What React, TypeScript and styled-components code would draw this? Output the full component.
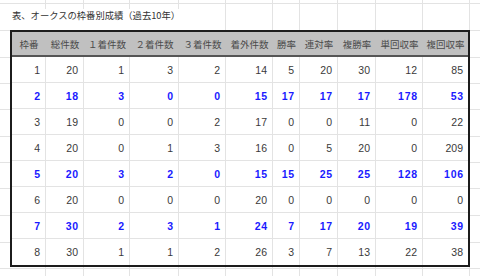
import React from "react";
import styled, { createGlobalStyle, css } from "styled-components";

const GlobalStyle = createGlobalStyle`
  html, body {
    margin: 0;
    padding: 0;
    background: #ffffff;
  }
  body {
    font-family: "Liberation Sans", "Noto Sans CJK JP", sans-serif;
  }
`;

// excel sheet gridlines behind the table
const vLines = [45, 83, 129, 178, 225, 272, 299, 337, 375, 422, 469];
const hLines = [3, 30, 57, 83, 109, 136, 162, 188, 215, 242, 268];
const lineColor = "#e3e3e3";

const gridImages = [...vLines, ...hLines]
  .map(() => `linear-gradient(${lineColor}, ${lineColor})`)
  .join(", ");
const gridPositions = [
  ...vLines.map((x) => `${x}px 0`),
  ...hLines.map((y) => `0 ${y}px`),
].join(", ");
const gridSizes = [
  ...vLines.map(() => "1px 100%"),
  ...hLines.map(() => "100% 1px"),
].join(", ");

const headers = [
  "枠番",
  "総件数",
  "１着件数",
  "２着件数",
  "３着件数",
  "着外件数",
  "勝率",
  "連対率",
  "複勝率",
  "単回収率",
  "複回収率",
];

const colWidths = [34, 38, 46, 49, 47, 47, 27, 38, 38, 47, 45];

const rows = [
  { hl: false, v: [1, 20, 1, 3, 2, 14, 5, 20, 30, 12, 85] },
  { hl: true, v: [2, 18, 3, 0, 0, 15, 17, 17, 17, 178, 53] },
  { hl: false, v: [3, 19, 0, 0, 2, 17, 0, 0, 11, 0, 22] },
  { hl: false, v: [4, 20, 0, 1, 3, 16, 0, 5, 20, 0, 209] },
  { hl: true, v: [5, 20, 3, 2, 0, 15, 15, 25, 25, 128, 106] },
  { hl: false, v: [6, 20, 0, 0, 0, 20, 0, 0, 0, 0, 0] },
  { hl: true, v: [7, 30, 2, 3, 1, 24, 7, 17, 20, 19, 39] },
  { hl: false, v: [8, 30, 1, 1, 2, 26, 3, 7, 13, 22, 38] },
];

const Sheet = styled.div`
  width: 480px;
  height: 276px;
  overflow: hidden;
  display: flex;
  flex-direction: column;
  align-items: flex-start;
  background-color: #ffffff;
  background-image: ${gridImages};
  background-position: ${gridPositions};
  background-size: ${gridSizes};
  background-repeat: no-repeat;
`;

const Title = styled.div`
  box-sizing: border-box;
  margin: 9px 0 0 10px;
  width: 214px;
  height: 21px;
  padding-left: 2px;
  background: #ffffff;
  font-family: "Noto Sans CJK JP", sans-serif;
  font-size: 9.3px;
  line-height: 13px;
  color: #333333;
  white-space: nowrap;
`;

const Table = styled.table`
  width: 460px;
  margin-left: 10px;
  table-layout: fixed;
  border-collapse: separate;
  border-spacing: 0;
  border: 2px solid #1c1c1c;
  background: #ffffff;
`;

const HeadRow = styled.tr`
  height: 25px;
`;

const HeadCell = styled.th`
  padding: 0;
  background: #c0c0c0;
  border-bottom: 2px solid #555555;
  font-family: "Noto Sans CJK JP", sans-serif;
  font-size: 9.5px;
  font-weight: normal;
  color: #4a4a4a;
  text-align: center;
  white-space: nowrap;
  overflow: hidden;
`;

const Row = styled.tr<{ $hl: boolean; $last: boolean }>`
  height: 26px;

  td {
    border-bottom: ${({ $last }) => ($last ? "none" : `1px solid ${lineColor}`)};
  }

  ${({ $hl }) =>
    $hl &&
    css`
      td {
        color: #1a1aff;
        font-weight: bold;
        letter-spacing: 0.8px;
        padding-right: 4px;
      }
    `}
`;

const Cell = styled.td`
  padding: 0 5px 0 0;
  text-align: right;
  font-size: 10.5px;
  color: #3a3a3a;
  border-right: 1px solid ${lineColor};
  white-space: nowrap;

  &:last-child {
    border-right: none;
  }
`;

export default function App() {
  return (
    <>
      <GlobalStyle />
      <Sheet>
        <Title>表、オークスの枠番別成績（過去10年）</Title>
        <Table>
          <colgroup>
            {colWidths.map((w, i) => (
              <col key={i} style={{ width: w }} />
            ))}
          </colgroup>
          <thead>
            <HeadRow>
              {headers.map((h) => (
                <HeadCell key={h}>{h}</HeadCell>
              ))}
            </HeadRow>
          </thead>
          <tbody>
            {rows.map((r, i) => (
              <Row key={i} $hl={r.hl} $last={i === rows.length - 1}>
                {r.v.map((n, j) => (
                  <Cell key={j}>{n}</Cell>
                ))}
              </Row>
            ))}
          </tbody>
        </Table>
      </Sheet>
    </>
  );
}
